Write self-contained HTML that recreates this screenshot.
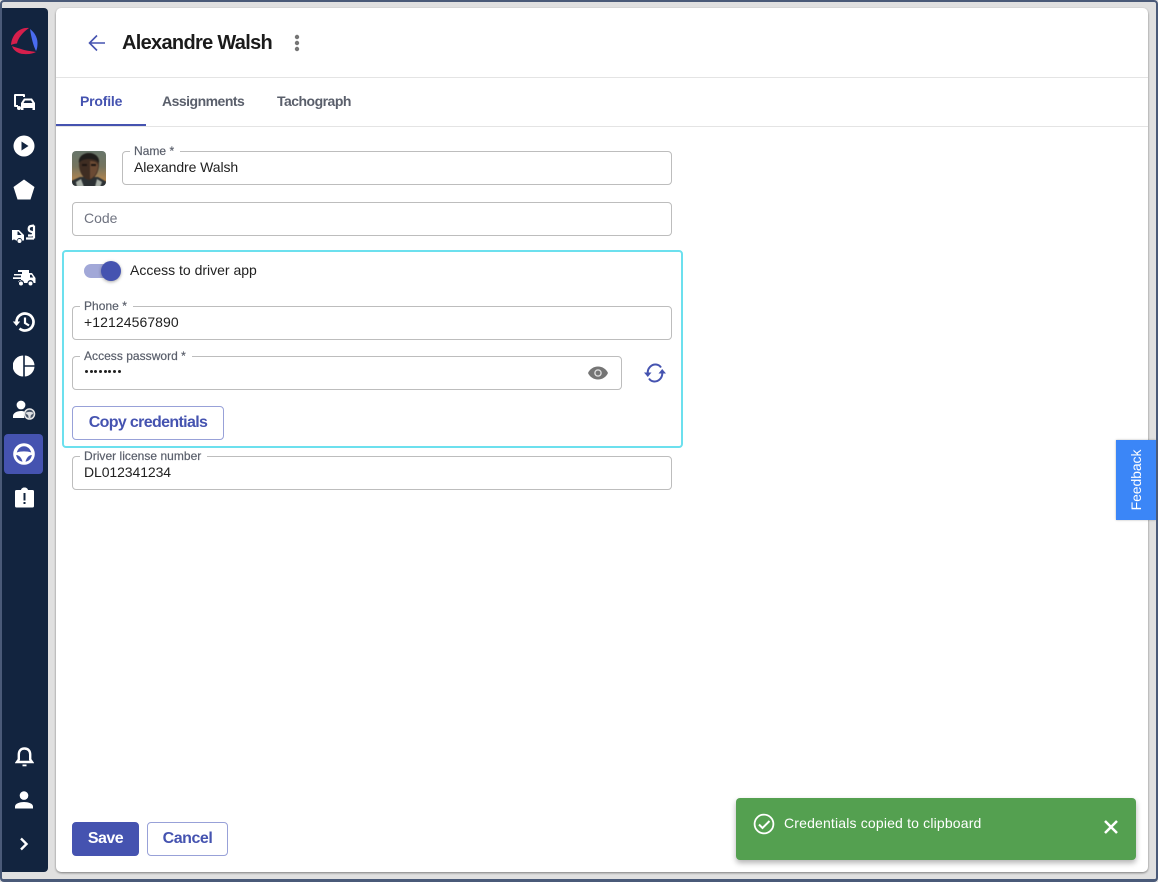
<!DOCTYPE html>
<html><head><meta charset="utf-8"><style>
*{box-sizing:border-box}
html,body{margin:0;padding:0}
body{width:1158px;height:882px;overflow:hidden;position:relative;background:#e0e0e0;font-family:"Liberation Sans",Arial,sans-serif;color:#212121}
.a{position:absolute}
.t{position:absolute;white-space:nowrap;line-height:1}
#frame{left:0;top:0;width:1158px;height:882px;border:2px solid #4a5a78;border-bottom-width:3px;border-radius:4px;pointer-events:none;z-index:9}
#side{left:2px;top:8px;width:46px;height:864px;background:#12243f;border-radius:0 4px 4px 0}
#card{left:56px;top:8px;width:1092px;height:864px;background:#fff;border-radius:5px;box-shadow:0 1px 2px rgba(0,0,0,.45)}
.f{position:absolute;border:1px solid #bdbdbd;border-radius:4px;height:34px;background:#fff}
.lab{position:absolute;top:-7px;left:7px;background:#fff;padding:0 6px 0 4px;font-size:12px;line-height:12px;color:#5a5f6b;white-space:nowrap;height:12px;letter-spacing:.03px;-webkit-text-stroke:.2px #5a5f6b}
.val{position:absolute;left:11px;top:8px;font-size:14px;line-height:14px;color:#212121;white-space:nowrap}
.btn{position:absolute;border:1px solid #98a1d8;border-radius:4px;background:#fff;color:#4553b0;font-weight:bold;font-size:16px;display:flex;align-items:center;justify-content:center}
.d{display:block;width:3px;height:3px;border-radius:50%;background:#212121}
svg{position:absolute;display:block}
</style></head><body>
<div class="a" id="side"></div>
<div class="a" style="left:4px;top:434px;width:39px;height:40px;background:#4553b0;border-radius:4px"></div>

<svg style="left:8px;top:24px" width="32" height="32" viewBox="0 0 32 32">
<path d="M21 4C13 3 4 9 3 21C5 20 8 19.500 9 19.500C10 14 15 8 21 4Z" fill="#d61f4c"/>
<path d="M4 22C5 26 10 30 16 30C21 30.500 25 29.500 28 28C22 27 17 26.500 13 25C10 24 6 23 4 22Z" fill="#d61f4c"/>
<path d="M22 5C26 8 29.500 13 29.500 19C29.500 23 29 25 28 27C25.500 22 23.500 15 22 5Z" fill="#4a6cf0"/>
</svg>

<!-- truck+car -->
<svg style="left:13px;top:92px" width="23" height="20" viewBox="0 0 23 20" fill="#fff">
<path d="M2 2h9a1 1 0 0 1 1 1v2h-2V4H3v9h2v2H2a1 1 0 0 1-1-1V3a1 1 0 0 1 1-1z"/><circle cx="6" cy="16" r="2"/>
<path d="M11 6.500h8l3 4.500v7h-2.500v-2h-9v2H8v-7zM12 8.500l-1.500 2.500h9L18 8.500z"/>
</svg>
<!-- play -->
<svg style="left:13px;top:135px" width="22" height="22" viewBox="0 0 22 22"><circle cx="11" cy="11" r="10.500" fill="#fff"/><path d="M8.500 6.500l7 4.500-7 4.500z" fill="#12243f"/></svg>
<!-- pentagon -->
<svg style="left:13px;top:179px" width="22" height="21" viewBox="0 0 22 21"><path d="M11 .5l10.500 7.500-4 12.500h-13L.5 8z" fill="#fff"/></svg>
<!-- truck + s -->
<svg style="left:11px;top:224px" width="26" height="20" viewBox="0 0 26 20" fill="#fff">
<path d="M1 6h7l5 5v5.500h-2a2.500 2.500 0 0 0-5 0H5a2.500 2.500 0 0 0-4 0z"/><path d="M7.500 7.500h-1v3.500h4z" fill="#12243f"/><circle cx="8.500" cy="17" r="2"/>
<path d="M15 14.500h8M23 1.500v13M23 1.500l-3 .5C17 2.500 17 6.500 19.500 7.500l1 .3c2.500.8 2 3.700-.5 3.700h-3" fill="none" stroke="#fff" stroke-width="2.200"/>
</svg>
<!-- fast truck -->
<svg style="left:12px;top:268px" width="24" height="20" viewBox="0 0 24 20" fill="#fff">
<path d="M6 2h11v3h3l3.500 5v5h-2a3 3 0 0 0-6 0H12a3 3 0 0 0-6 0v-2h3v-2H1V9.300h8V7.500H2V6h8V4H6z"/><circle cx="9" cy="15.500" r="2.500" stroke="#12243f" stroke-width="1"/><circle cx="18.500" cy="15.500" r="2.500" stroke="#12243f" stroke-width="1"/><path d="M18 6.800h1.500l1.700 2.700H18z" fill="#12243f"/>
</svg>
<!-- history -->
<svg style="left:12px;top:311px" width="24" height="22" viewBox="0 0 24 22" fill="none" stroke="#fff" stroke-width="2.700">
<path d="M4.500 11a8.500 8.500 0 1 1 3 6.500"/><path d="M13 6.500V12l4 2.500" stroke-width="2.200"/><path d="M.8 10.500h7.400L4.500 15z" fill="#fff" stroke="none"/>
</svg>
<!-- pie -->
<svg style="left:13px;top:355px" width="22" height="22" viewBox="0 0 22 22" fill="#fff"><path d="M10.200 .5v21A10.500 10.500 0 0 1 10.200 .5z"/><path d="M11.800 .5A10.500 10.500 0 0 1 21.500 10.200H11.800z"/><path d="M11.800 11.800h9.700A10.500 10.500 0 0 1 11.800 21.500z"/></svg>
<!-- user wheel -->
<svg style="left:13px;top:400px" width="23" height="20" viewBox="0 0 23 20">
<circle cx="8" cy="5" r="4.400" fill="#fff"/><path d="M0 18v-2c0-3 4-5 8-5 1.500 0 3 .3 4 .8-1 1.500-1.500 4-.5 6.200z" fill="#fff"/>
<circle cx="16.500" cy="14" r="5" fill="#4a5668" stroke="#e8e8e8" stroke-width="1.500"/><path d="M12.500 13c2-1.500 6-1.500 8 0l-1.500 1.500c-1 0-1.500 1-1.500 3.500h-2c0-2.500-.5-3.500-1.500-3.500z" fill="#dfe1e4"/>
</svg>
<!-- wheel active -->
<svg style="left:13px;top:443px" width="22" height="22" viewBox="0 0 22 22">
<circle cx="11" cy="11" r="10.800" fill="#fff"/>
<path d="M3.800 9.500C4.800 5.500 7.800 3.200 11 3.200S17.200 5.500 18.200 9.500C14.500 8 7.500 8 3.800 9.500Z" fill="#4553b0"/>
<path d="M3.200 12C5.800 12 8.500 14.500 9.500 18.800C5.800 18 3.600 15.500 3.200 12Z" fill="#4553b0"/>
<path d="M18.800 12C16.200 12 13.500 14.500 12.500 18.800C16.200 18 18.400 15.500 18.800 12Z" fill="#4553b0"/>
</svg>
<!-- clipboard alert -->
<svg style="left:15px;top:487px" width="19" height="21" viewBox="0 0 19 21"><path d="M1.500 3H6c.3-1.500 1.700-2.500 3.500-2.500S12.700 1.500 13 3h4.500a1.500 1.500 0 0 1 1.500 1.500V19a1.500 1.500 0 0 1-1.500 1.500h-16A1.500 1.500 0 0 1 0 19V4.500A1.500 1.500 0 0 1 1.500 3z" fill="#fff"/><path d="M8.500 6h2v7.500h-2zM8.500 15h2v2h-2z" fill="#12243f"/></svg>
<!-- bell -->
<svg style="left:15px;top:746px" width="19" height="21" viewBox="0 0 19 21" fill="none" stroke="#fff" stroke-width="2.400"><path d="M2 16h15l-1.800-2.500V8.500c0-3.500-2-6-5.700-6s-5.700 2.500-5.700 6v5z"/><path d="M7.500 18.500h4v1.800h-4z" fill="#fff" stroke="none"/></svg>
<!-- person -->
<svg style="left:15px;top:791px" width="18" height="18" viewBox="0 0 18 18" fill="#fff"><circle cx="9" cy="4.600" r="4.300"/><path d="M0 17.500v-2C0 12.500 5 11 9 11s9 1.500 9 4.500v2z"/></svg>
<!-- chevron -->
<svg style="left:18px;top:837px" width="12" height="14" viewBox="0 0 12 14"><path d="M3 1.500L8.500 7 3 12.500" fill="none" stroke="#fff" stroke-width="2.400"/></svg>

<div class="a" id="card"></div>

<!-- header -->
<svg style="left:87px;top:33px" width="20" height="20" viewBox="0 0 20 20"><path d="M18 10H3M10 2.500L2.500 10l7.500 7.500" fill="none" stroke="#4553b0" stroke-width="1.600"/></svg>
<div class="t" style="left:122px;top:33px;font-size:20px;line-height:20px;font-weight:bold;color:#1b1b1b;letter-spacing:-.69px">Alexandre Walsh</div>
<svg style="left:294px;top:34px" width="6" height="18" viewBox="0 0 6 18" fill="#757575"><circle cx="3" cy="3" r="2.200"/><circle cx="3" cy="9" r="2.200"/><circle cx="3" cy="15" r="2.200"/></svg>
<div class="a" style="left:56px;top:77px;width:1092px;height:1px;background:#e4e4e4"></div>
<!-- tabs -->
<div class="t" style="left:80px;top:94px;font-size:14px;font-weight:bold;color:#4553b0;letter-spacing:-.2px">Profile</div>
<div class="t" style="left:162px;top:94px;font-size:14px;font-weight:bold;color:#5a5f6b;letter-spacing:-.51px">Assignments</div>
<div class="t" style="left:277px;top:94px;font-size:14px;font-weight:bold;color:#5a5f6b;letter-spacing:-.52px">Tachograph</div>
<div class="a" style="left:56px;top:126px;width:1092px;height:1px;background:#e4e4e4"></div>
<div class="a" style="left:56px;top:124px;width:90px;height:2px;background:#4553b0"></div>

<!-- avatar -->
<svg style="left:72px;top:151px;border-radius:4px" width="34" height="35" viewBox="0 0 34 35">
<defs><linearGradient id="g" x1="0" y1="0" x2="0" y2="1"><stop offset="0" stop-color="#66766c"/><stop offset=".45" stop-color="#75745f"/><stop offset=".8" stop-color="#b0844f"/><stop offset="1" stop-color="#8c6c48"/></linearGradient></defs>
<g style="filter:blur(.6px)">
<rect x="-2" y="-2" width="38" height="39" fill="url(#g)"/>
<path d="M-1 36v-6l9-4h18l9 5v5z" fill="#2b3033"/>
<path d="M4 31l5-3 3 8H5zM25 28l5 3-2 5h-5z" fill="#a9b0a8"/>
<path d="M7 13c0-6 4-9 10-9s10 3 10 9c0 8-4 15-10 16-6-1-10-8-10-16z" fill="#3f2d22"/>
<path d="M7 12c-1-6 4-10 10-10s11 4 10 10c-2-3-6-4-10-4s-8 1-10 4z" fill="#1f1d1b"/>
<path d="M18 10c4 0 8 1 8 5 0 5-3 11-8 13z" fill="#6b4a33"/>
<path d="M10 13h5v2h-5zM19 13h5v2h-5z" fill="#1c1512"/>
</g>
</svg>

<!-- Name -->
<div class="f" style="left:122px;top:151px;width:550px"><div class="lab">Name *</div><div class="val" style="letter-spacing:-.08px">Alexandre Walsh</div></div>
<!-- Code -->
<div class="f" style="left:72px;top:202px;width:600px"><div class="val" style="color:#6f7380">Code</div></div>

<!-- highlighted box -->
<div class="a" style="left:62px;top:250px;width:621px;height:198px;border:2px solid #6ce0ee;border-radius:4px;background:#fff"></div>
<div class="a" style="left:84px;top:264px;width:34px;height:14px;border-radius:7px;background:#a2a8d8"></div>
<div class="a" style="left:101px;top:261px;width:20px;height:20px;border-radius:50%;background:#4553b0;box-shadow:0 1px 3px rgba(0,0,0,.35)"></div>
<div class="t" style="left:130px;top:263px;font-size:14px;color:#212121">Access to driver app</div>

<div class="f" style="left:72px;top:306px;width:600px"><div class="lab">Phone *</div><div class="val" style="letter-spacing:.08px">+12124567890</div></div>
<div class="f" style="left:72px;top:356px;width:550px"><div class="lab">Access password *</div>
<div style="position:absolute;left:12px;top:13px;display:flex;gap:1.700px"><i class="d"></i><i class="d"></i><i class="d"></i><i class="d"></i><i class="d"></i><i class="d"></i><i class="d"></i><i class="d"></i></div></div>
<svg style="left:587px;top:365px" width="22" height="16" viewBox="0 0 22 16"><path d="M11 1.500C6.500 1.500 2.700 4.200 1 8c1.700 3.800 5.500 6.500 10 6.500S19.300 11.800 21 8c-1.700-3.800-5.500-6.500-10-6.500z" fill="#757575"/><circle cx="11" cy="8" r="3.800" fill="#fff" opacity=".75"/><circle cx="11" cy="8" r="2.400" fill="#757575"/></svg>
<svg style="left:643px;top:362px" width="24" height="22" viewBox="0 0 24 22" fill="none" stroke="#4553b0" stroke-width="2">
<path d="M4.800 12C4 6 9 2 13 2.500c2.500.3 4 1.300 5 3"/><path d="M19.200 10c.8 6-4.200 10-8.200 9.500-2.500-.3-4-1.300-5-3"/>
<path d="M1 10.500h7.500l-3.700 4.500zM15.500 11.500H23L19.200 7z" fill="#4553b0" stroke="none"/></svg>

<div class="btn" style="left:72px;top:406px;width:152px;height:34px;letter-spacing:-.65px">Copy credentials</div>

<div class="f" style="left:72px;top:456px;width:600px"><div class="lab">Driver license number</div><div class="val" style="letter-spacing:-.09px">DL012341234</div></div>

<!-- footer buttons -->
<div class="btn" style="left:72px;top:822px;width:67px;height:34px;background:#4553b0;border-color:#4553b0;color:#fff;letter-spacing:-.5px">Save</div>
<div class="btn" style="left:147px;top:822px;width:81px;height:34px;letter-spacing:-.45px">Cancel</div>

<!-- feedback -->
<div class="a" style="left:1116px;top:440px;width:40px;height:80px;background:#3b86f7;box-shadow:0 0 2px rgba(0,0,0,.3)"></div>
<div class="t" style="left:1096px;top:473px;width:80px;text-align:center;font-size:14px;color:#fff;transform:rotate(-90deg);letter-spacing:-.1px">Feedback</div>

<!-- toast -->
<div class="a" style="left:736px;top:798px;width:400px;height:62px;background:#54a050;border-radius:4px;box-shadow:0 3px 6px rgba(0,0,0,.3)"></div>
<svg style="left:753px;top:813px" width="22" height="22" viewBox="0 0 22 22" fill="none" stroke="#fff" stroke-width="1.800"><circle cx="11" cy="11" r="9.400"/><path d="M6 11.500l3.500 3.500L16.500 8" stroke-width="2"/></svg>
<div class="t" style="left:784px;top:816px;font-size:14px;color:#fff;letter-spacing:.17px">Credentials copied to clipboard</div>
<svg style="left:1103px;top:819px" width="16" height="16" viewBox="0 0 16 16"><path d="M2 2l12 12M14 2L2 14" stroke="#fff" stroke-width="2.500"/></svg>

<div class="a" id="frame"></div>
</body></html>
